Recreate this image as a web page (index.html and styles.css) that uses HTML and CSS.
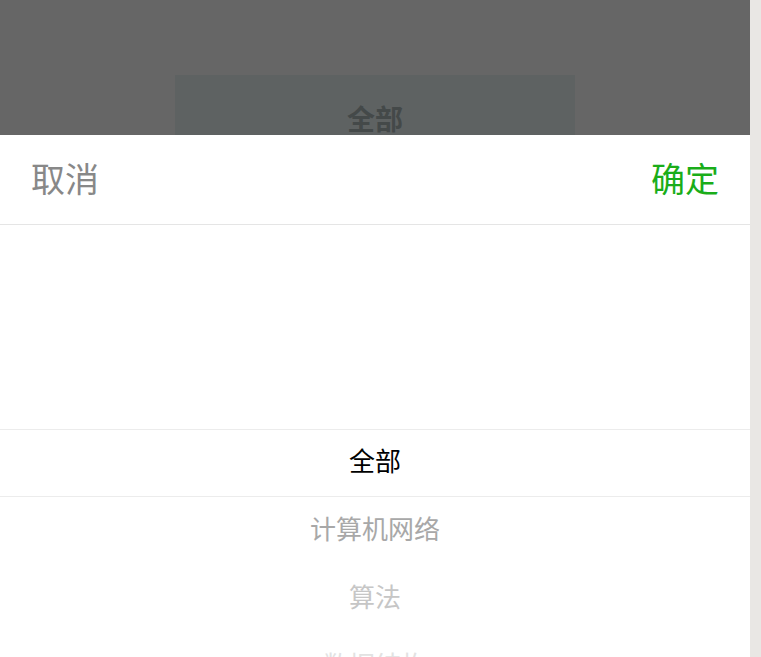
FILE: index.html
```html
<!DOCTYPE html>
<html lang="zh-CN">
<head>
    <meta charset="UTF-8">
    <meta name="viewport" content="width=device-width, initial-scale=1.0">
    <title>选择分类</title>
    <link rel="stylesheet" href="styles.css">
</head>
<body>
    <div class="telefono">
        <!-- Página detrás de la máscara -->
        <div class="mascara">
            <div class="filtro">全部</div>
        </div>

        <div class="hoja">
            <div class="cabecera">
                <span class="cancelar">取消</span>
                <span class="confirmar">确定</span>
            </div>
            <div class="selector">
                <div class="columna">
                    <div class="hueco"></div>
                    <div class="opcion activa">全部</div>
                    <div class="opcion o1">计算机网络</div>
                    <div class="opcion o2">算法</div>
                    <div class="opcion o3">数据结构</div>
                </div>
                <div class="indicador"></div>
            </div>
        </div>
    </div>
    <div class="pista"></div>
</body>
</html>
```
FILE: styles.css
```css
body {
    margin: 0;
    display: flex;
    height: 657px;
    overflow: hidden;
    background-color: #e9e7e4; /* franja de la derecha */
    font-family: "Noto Sans CJK SC", "Noto Sans", sans-serif;
}
.telefono {
    width: 750px;
    height: 657px;
    display: flex;
    flex-direction: column;
    background-color: #fff;
    overflow: hidden;
}
.mascara {
    flex-shrink: 0;
    height: 135px;
    background-color: #666;
    padding-top: 75px;
    box-sizing: border-box;
    overflow: hidden;
}
.filtro {
    width: 400px;
    height: 100px;
    margin: 0 auto;
    background-color: #5e6262;
    color: #444949;
    font-size: 28px;
    font-weight: bold;
    text-align: center;
    padding-top: 23px;
    box-sizing: border-box;
    line-height: 40px;
}
.hoja {
    flex-shrink: 0;
    background-color: #fff;
}
.cabecera {
    height: 90px;
    box-sizing: border-box;
    display: flex;
    justify-content: space-between;
    align-items: center;
    padding: 0 31px 4px;
    border-bottom: 1px solid #e5e5e5;
    font-size: 34px;
}
.cancelar {
    color: #888;
}
.confirmar {
    color: #1aad19;
}
.selector {
    height: 476px;
    position: relative;
    overflow: hidden;
}
.hueco {
    height: 204px;
}
.opcion {
    height: 68px;
    line-height: 62px;
    text-align: center;
    font-size: 26px;
    color: #000;
}
.o1 {
    color: #a8a8a8;
}
.o2 {
    color: #c6c6c6;
}
.o3 {
    color: #e2e2e2;
}
.indicador {
    position: absolute;
    left: 0;
    right: 0;
    top: 204px;
    height: 66px;
    border-top: 1px solid #ececec;
    border-bottom: 1px solid #ececec;
}
.pista {
    flex: 1;
}
```
